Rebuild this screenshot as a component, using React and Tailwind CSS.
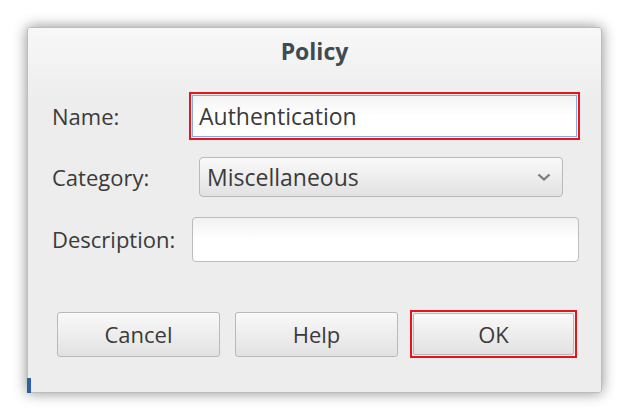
const field = "bg-gradient-to-b from-[#f9f9f9] to-[#e2e2e2] border border-[#b9b9b9] text-[#3a3a3a]"

const Button = ({ children }) => (
  <button className={`${field} h-[45px] w-[163px] rounded-[3px] text-[22px] leading-none`}>
    {children}
  </button>
)

export default function App() {
  return (
    <div className="relative w-[627px] h-[420px] bg-white font-['Open_Sans',sans-serif] overflow-hidden">
      <div className="relative ml-[27px] mt-[27px] w-[575px] h-[366px] border border-[#bdbdbd] rounded-[3px] bg-gradient-to-b from-[#f8f8f8] via-[#ededed] via-[20%] to-[#ededed] shadow-[0_0_14px_rgba(0,0,0,0.45)]">
        {/* Title */}
        <div className="pt-[8px] leading-[30px] text-center text-[23px] font-bold text-[#3e4b55]">
          Policy
        </div>

        <div className="pl-[24px] pt-[26px]">
          {/* Name */}
          <div className="flex items-center h-[48px]">
            <span className="w-[137px] text-[22px] text-[#3a3a3a]">Name:</span>
            <div className="w-[391px] h-[48px] border-2 border-[#e8141c] p-px">
              <div className="h-full border border-[#7fb0e0] bg-gradient-to-b from-[#f3f3f3] via-white to-white flex items-center pl-[6px] text-[23px] text-[#3a3a3a]">
                Authentication
              </div>
            </div>
          </div>

          {/* Category */}
          <div className="flex items-center h-[40px] mt-[17px]">
            <span className="w-[147px] text-[22px] text-[#3a3a3a]">Category:</span>
            <div className={`${field} w-[364px] h-[40px] rounded-[4px] flex items-center justify-between pl-[7px] pr-[11px] text-[23px]`}>
              <span>Miscellaneous</span>
              <svg width="14" height="9" viewBox="0 0 14 9" fill="none">
                <path d="M1.5 1.5l5.5 5 5.5-5" stroke="#7a7a7a" strokeWidth="2.2" />
              </svg>
            </div>
          </div>

          {/* Description */}
          <div className="flex items-center h-[45px] mt-[20px]">
            <span className="w-[140px] text-[22px] text-[#3a3a3a]">Description:</span>
            <div className="w-[387px] h-[45px] rounded-[4px] border border-[#bcbcbc] bg-gradient-to-b from-[#f1f1f1] via-white to-white" />
          </div>
        </div>

        {/* Buttons */}
        <div className="flex items-center pl-[29px] mt-[48px]">
          <Button>Cancel</Button>
          <div className="ml-[15px]">
            <Button>Help</Button>
          </div>
          <div className="ml-[12px] border-2 border-[#e8141c] p-px">
            <button className={`${field} h-[42px] w-[161px] rounded-[2px] text-[22px] leading-none`}>
              OK
            </button>
          </div>
        </div>
      </div>

      {/* bit of a window behind the dialog, peeking out at the corner */}
      <div className="absolute left-[27px] top-[378px] w-[4px] h-[15px] bg-[#2b5fa8]" />
    </div>
  )
}
